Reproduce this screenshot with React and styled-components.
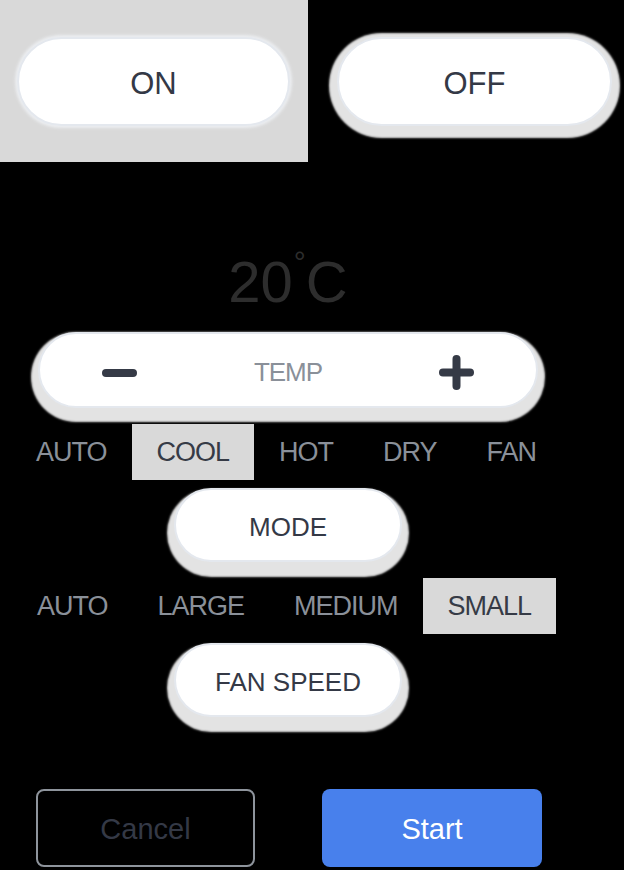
import React, { useState } from "react";
import styled, { createGlobalStyle } from "styled-components";

const GlobalStyle = createGlobalStyle`
  html, body {
    margin: 0;
    padding: 0;
    background: #000;
  }
  body {
    font-family: "Liberation Sans", Arial, sans-serif;
  }
`;

const modes = ["AUTO", "COOL", "HOT", "DRY", "FAN"];
const speeds = ["AUTO", "LARGE", "MEDIUM", "SMALL"];

const App = () => {
  const [power, setPower] = useState("on");
  const [temp, setTemp] = useState(20);
  const [mode, setMode] = useState("COOL");
  const [speed, setSpeed] = useState("SMALL");

  return (
    <>
      <GlobalStyle />
      <TopRow>
        <PowerCell $active={power === "on"}>
          <Pill $w={273} $h={89} $flat onClick={() => setPower("on")}>
            <PowerLabel>ON</PowerLabel>
          </Pill>
        </PowerCell>
        <PowerCell $active={power === "off"} $offset>
          <Pill $w={275} $h={89} $lift={4} $spread={8} onClick={() => setPower("off")}>
            <PowerLabel>OFF</PowerLabel>
          </Pill>
        </PowerCell>
      </TopRow>

      <Column>
        <Temp>
          {temp}
          <Degree>°</Degree>C
        </Temp>

        <TempPill>
          <IconButton onClick={() => setTemp(temp - 1)} aria-label="decrease">
            <svg width="35" height="8" viewBox="0 0 35 8">
              <line x1="4" y1="4" x2="31" y2="4" stroke="#353a46" strokeWidth="8" strokeLinecap="round" />
            </svg>
          </IconButton>
          <TempLabel>TEMP</TempLabel>
          <IconButton onClick={() => setTemp(temp + 1)} aria-label="increase">
            <svg width="35" height="35" viewBox="0 0 35 35">
              <line x1="4" y1="17.5" x2="31" y2="17.5" stroke="#353a46" strokeWidth="8" strokeLinecap="round" />
              <line x1="17.5" y1="4" x2="17.5" y2="31" stroke="#353a46" strokeWidth="8" strokeLinecap="round" />
            </svg>
          </IconButton>
        </TempPill>

        <OptionRow $start={11}>
          {modes.map((m) => (
            <Option key={m} $selected={mode === m} onClick={() => setMode(m)}>
              {m}
            </Option>
          ))}
        </OptionRow>
        <SectionPill $w={228} $h={74} $top={8}>
          <SectionLabel>MODE</SectionLabel>
        </SectionPill>

        <OptionRow $start={12}>
          {speeds.map((s) => (
            <Option key={s} $selected={speed === s} onClick={() => setSpeed(s)}>
              {s}
            </Option>
          ))}
        </OptionRow>
        <SectionPill $w={228} $h={74} $top={9}>
          <SectionLabel>FAN SPEED</SectionLabel>
        </SectionPill>
      </Column>

      <Actions>
        <CancelButton>Cancel</CancelButton>
        <StartButton>Start</StartButton>
      </Actions>
    </>
  );
};

const TopRow = styled.div`
  display: flex;
  height: 162px;
`;

const PowerCell = styled.div`
  width: ${(p) => (p.$offset ? "287px" : "308px")};
  box-sizing: border-box;
  padding: 37px 0 0 ${(p) => (p.$offset ? "29px" : "17px")};
  background: ${(p) => (p.$active ? "#d9d9d9" : "transparent")};
`;

const Pill = styled.button`
  display: flex;
  align-items: center;
  justify-content: center;
  box-sizing: border-box;
  width: ${(p) => p.$w}px;
  height: ${(p) => p.$h}px;
  margin: 0;
  padding: 4px 0 0;
  border: 2px solid #e4e8ee;
  border-radius: ${(p) => p.$h / 2}px;
  background: #fff;
  cursor: pointer;
  font-family: "Liberation Sans", Arial, sans-serif;
  box-shadow: ${(p) =>
    p.$flat
      ? "0 0 3px 2px #eceef1"
      : `0 ${p.$lift ?? 8}px 2px ${p.$spread ?? 7}px #e3e3e3`};
`;

const PowerLabel = styled.span`
  font-size: 31px;
  color: #343946;
`;

const Column = styled.div`
  width: 576px;
  display: flex;
  flex-direction: column;
  align-items: center;
`;

const Temp = styled.div`
  margin-top: 91px;
  height: 58px;
  font-size: 58px;
  line-height: 58px;
  color: #2d2d2d;
  white-space: nowrap;
`;

const Degree = styled.span`
  display: inline-block;
  font-size: 30px;
  line-height: 30px;
  vertical-align: top;
  margin: -6px 0 0 1px;
`;

const TempPill = styled.div`
  margin-top: 21px;
  width: 500px;
  height: 76px;
  box-sizing: border-box;
  padding: 5px 62px 0;
  display: flex;
  align-items: center;
  justify-content: space-between;
  background: #fff;
  border: 2px solid #e4e8ee;
  border-radius: 38px;
  box-shadow: 0 7px 2px 7px #e3e3e3;
`;

const IconButton = styled.button`
  display: flex;
  align-items: center;
  justify-content: center;
  width: 35px;
  height: 35px;
  padding: 0;
  border: none;
  background: none;
  cursor: pointer;
`;

const TempLabel = styled.span`
  font-size: 26px;
  letter-spacing: -1px;
  color: #8a9099;
`;

const OptionRow = styled.div`
  align-self: stretch;
  display: flex;
  height: 56px;
  margin-top: 16px;
  padding-left: ${(p) => p.$start}px;
`;

const Option = styled.div`
  display: flex;
  align-items: center;
  padding: 0 25px;
  font-size: 27px;
  letter-spacing: -1px;
  color: ${(p) => (p.$selected ? "#363b46" : "#8a9099")};
  background: ${(p) => (p.$selected ? "#d9d9d9" : "transparent")};
  cursor: pointer;
`;

const SectionPill = styled(Pill)`
  margin-top: ${(p) => p.$top}px;
`;

const SectionLabel = styled.span`
  font-size: 26px;
  color: #343946;
`;

const Actions = styled.div`
  display: flex;
  gap: 67px;
  margin-top: 72px;
  padding-left: 36px;
`;

const ActionButton = styled.button`
  width: 220px;
  height: 78px;
  box-sizing: border-box;
  padding-top: 3px;
  border-radius: 8px;
  font-family: "Liberation Sans", Arial, sans-serif;
  font-size: 29px;
  cursor: pointer;
`;

const CancelButton = styled(ActionButton)`
  width: 219px;
  background: transparent;
  border: 2px solid #8e949c;
  color: #343946;
`;

const StartButton = styled(ActionButton)`
  background: #4880ec;
  border: none;
  color: #fff;
`;

export default App;
